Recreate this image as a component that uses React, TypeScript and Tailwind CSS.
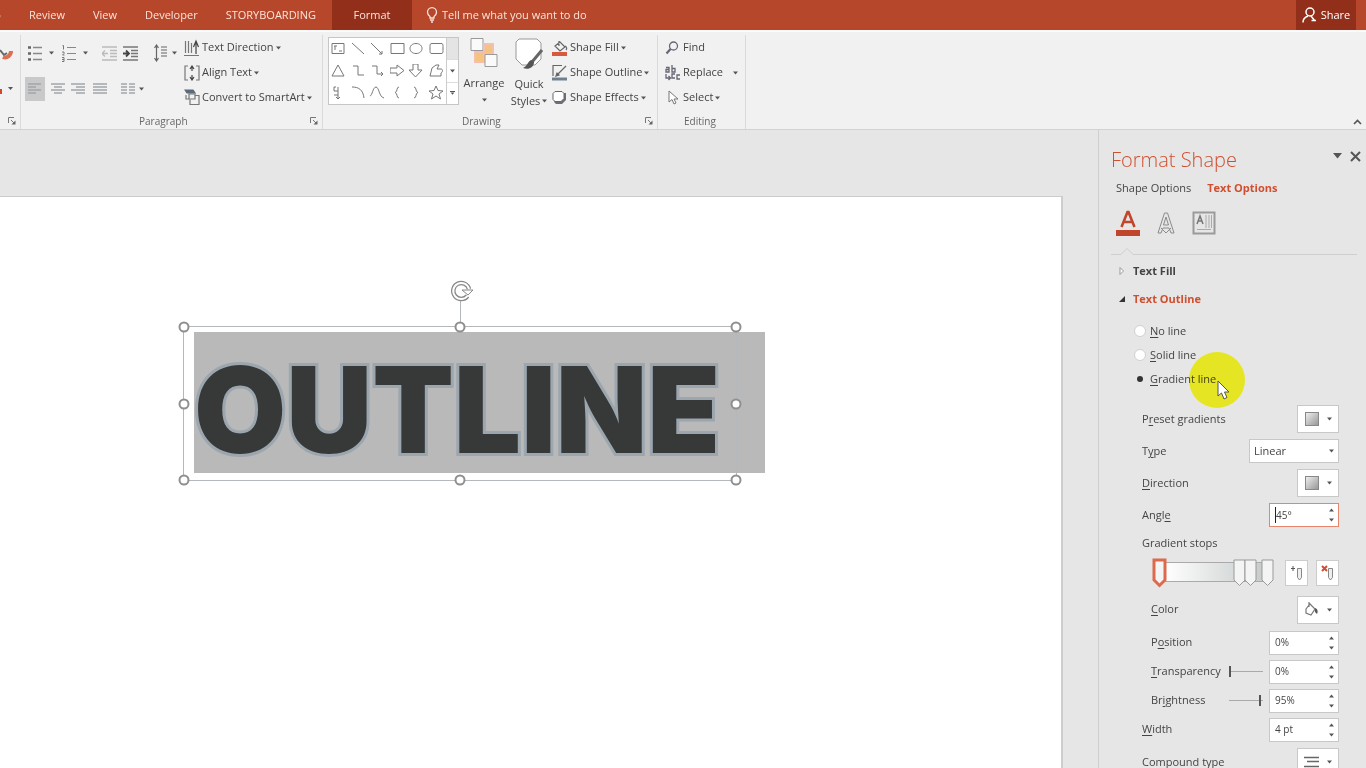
import React from 'react';

const Caret: React.FC<{ className?: string }> = ({ className = '' }) => (
  <svg className={`shrink-0 ${className}`} width="5" height="4" viewBox="0 0 5 4" fill="#555">
    <path d="M0 0.5h5L2.5 3.5z" />
  </svg>
);

const Launcher: React.FC = () => (
  <button aria-label="More options" className="ml-auto">
    <svg width="8" height="8" viewBox="0 0 8 8" fill="none" stroke="#777">
      <path d="M0.5 6V0.5H6M3 3l3 3" />
      <path d="M7.5 3.5v4h-4z" fill="#666" stroke="none" />
    </svg>
  </button>
);

// Label with its accelerator letter underlined
const Accel: React.FC<{ text: string; at?: number }> = ({ text, at = 0 }) => (
  <>
    {text.slice(0, at)}
    <span className="underline underline-offset-2">{text[at]}</span>
    {text.slice(at + 1)}
  </>
);

const tabs = ['Review', 'View', 'Developer', 'STORYBOARDING'];

const TitleTabs: React.FC = () => (
  <header className="flex h-[30px] shrink-0 items-stretch bg-[#b7472a] text-[11px] text-[#fbe3dc]">
    <nav className="flex">
      <button className="w-[15px] overflow-hidden">
        <span className="-ml-5">o</span>
      </button>
      {tabs.map((tab) => (
        <button key={tab} className="px-3.5">{tab}</button>
      ))}
      <button className="ml-0.5 w-20 bg-[#922f1a]">Format</button>
    </nav>
    <button className="ml-3.5 flex items-center gap-1">
      <svg width="12" height="16" viewBox="0 0 12 16" fill="none" stroke="#fbe3dc" strokeWidth="1.3">
        <path d="M4 11V9.5C2.500 8.500 1.500 7 1.500 5.200a4.500 4.500 0 0 1 9 0C10.500 7 9.500 8.500 8 9.500V11zM4 13h4M5 15h2" />
      </svg>
      Tell me what you want to do
    </button>
    <button className="mr-2.5 ml-auto flex w-[60px] items-center justify-center gap-1 bg-[#922f1a] text-white">
      <svg width="15" height="17" viewBox="0 0 15 17" fill="none" stroke="#fff" strokeWidth="1.5">
        <circle cx="8" cy="5" r="4" />
        <path d="M1 15.500c0-3.500 2-5.500 5-6.500M9 9l4 5M9.500 13.500h4.500" />
      </svg>
      Share
    </button>
  </header>
);

const BulletsIcon = () => (
  <svg width="15" height="17" viewBox="0 0 15 17" stroke="#888" strokeWidth="1.3">
    <path d="M5 2.500h9M5 8.500h9M5 14.500h9" />
    <path d="M0 2.500h3M0 8.500h3M0 14.500h3" stroke="#666" strokeWidth="2.500" />
  </svg>
);

const NumbersIcon = () => (
  <svg width="15" height="19" viewBox="0 0 15 19" fill="none" stroke="#888" strokeWidth="1.2">
    <path d="M5 3.500h9M5 9.500h9M5 15.500h9" />
    <path d="M0.500 1.500h1v4M0 8h2v1.500L0.500 11h2M0 13.500h2v4H0M0 15.500h2" stroke="#777" strokeWidth="1" />
  </svg>
);

const IndentIcon: React.FC<{ color: string; flip?: boolean }> = ({ color, flip }) => (
  <svg width="15" height="15" viewBox="0 0 15 15" fill="none" stroke={color} strokeWidth="1.4">
    <path d="M0 1h15M8 4.500h7M8 7.500h7M8 10.500h7M0 14h15" />
    {flip ? <path d="M6 7.500H0M3 4.500L0 7.500l3 3" /> : <path d="M0 7.500h6M3 4.500l3 3-3 3" stroke="#444" strokeWidth="1.800" />}
  </svg>
);

const SpacingIcon = () => (
  <svg width="14" height="18" viewBox="0 0 14 18" fill="none" stroke="#666" strokeWidth="1.2">
    <path d="M2.500 2v14M0.500 4l2-3 2 3M0.500 14l2 3 2-3" />
    <path d="M7 3h6M7 6h6M7 9h6M7 12h6" stroke="#aaa" strokeWidth="2" />
  </svg>
);

const AlignIcon: React.FC<{ d: string }> = ({ d }) => (
  <svg width="14" height="13" viewBox="0 0 14 13" stroke="#a3a6a9" strokeWidth="1.600">
    <path d={d} />
  </svg>
);

const TextDirectionIcon = () => (
  <svg width="16" height="18" viewBox="0 0 16 18" fill="none" stroke="#777" strokeWidth="1.2">
    <path d="M1.500 2v12M4.500 2v12M7.500 4v10M0 16.500h15" />
    <path d="M9.500 8l2.500-6 2.500 6M12 2v13" stroke="#444" />
  </svg>
);

const AlignTextIcon = () => (
  <svg width="16" height="16" viewBox="0 0 16 16" fill="none" stroke="#777" strokeWidth="1.2">
    <path d="M4 1H1v14h3M12 1h3v14h-3" />
    <path d="M8 1v5M8 10v5M6 4l2-3 2 3M6 12l2 3 2-3" stroke="#444" />
  </svg>
);

const SmartArtIcon = () => (
  <svg width="16" height="17" viewBox="0 0 16 17" fill="none" stroke="#777" strokeWidth="1.2">
    <path d="M1 1h8l2 3H3z" fill="#5b6b78" stroke="#5b6b78" />
    <path d="M2 6v4h3M8 6.500h7v9H6v-5" />
    <path d="M5 5h6v5H5z" fill="#f1f1f1" />
  </svg>
);

const CommandButton: React.FC<{ icon: React.ReactNode; label: string; menu?: boolean; far?: boolean }> = ({ icon, label, menu = true, far }) => (
  <button className="flex h-[25px] items-center whitespace-nowrap">
    <span className="mr-0.5 flex w-4 items-center">{icon}</span>
    {label}
    {menu && <Caret className={far ? 'ml-2.5' : 'ml-0.5'} />}
  </button>
);

const Divider = () => <span className="h-5 w-px bg-[#d6d6d6]" />;

const galleryShapes = [
  'M1 1.500h12v10H1zM4 4v4M3 4h3M8 9h3',
  'M1 1l12 11',
  'M1 1l11 11M9 12h3V9',
  'M1 1.500h13v10H1z',
  'M7 1.500c8 0 8 10 0 10s-8-10 0-10z',
  'M3 1.500h9c2 0 2 1 2 3v4c0 2 0 3-2 3H3c-2 0-2-1-2-3v-4c0-2 0-3 2-3z',
  'M7 1L1 12h12z',
  'M2 2h5v9h6',
  'M2 2h5v8h6M11 8l2 2-2 2',
  'M0 4h7V1l7 5.500L7 12V9H0z',
  'M4 0h5v6h4l-6.500 7L0 6h4z',
  'M3 4l4-3h3L8 5h4c2 0 2 3 0 4v3H1z',
  'M5 1H3v4h4v4H3M7 9v4M5 11l2 2 2-2M7 1v4',
  'M1 1c7 0 11 3 12 11',
  'M0 10C2 10 3 1 6 1s3 10 8 11',
  'M9 1C6 1 8 6 5 6.500 8 7 6 12 9 12',
  'M5 1c3 0 1 5 4 5.500C6 7 8 12 5 12',
  'M7 0l2 4.500 5 .5-4 3 1.500 5L7 10l-4.500 3L4 8 0 5l5-.5z',
];

const Ribbon: React.FC = () => (
  <section className="flex h-[100px] shrink-0 border-t-2 border-b border-t-[#fafafa] border-b-[#d2d2d2] bg-[#f1f1f1] pt-[3px] text-[11px] text-[#444]">
    <div className="flex w-[21px] flex-col border-r border-[#dadada]">
      <div className="flex-1 overflow-hidden pt-2.5">
        <svg width="13" height="55" viewBox="0 0 13 55" fill="none">
          <path d="M0 5l4 5 3-2" stroke="#666" strokeWidth="2" />
          <path d="M3 12c4 2 8-2 8-6" stroke="#dc6e52" strokeWidth="4" />
          <path d="M0 44h2v5H0z" fill="#d24726" />
          <path d="M8 42h5l-2.500 3z" fill="#555" />
        </svg>
      </div>
      <div className="flex h-4 items-center pr-1"><Launcher /></div>
    </div>

    <div className="flex w-[302px] flex-col border-r border-[#dadada]">
      <div className="flex flex-1">
        <div className="w-[163px] pl-1">
          <div className="flex h-9 items-center">
            <button aria-label="Bullets" className="ml-[3px] flex items-center gap-1.5"><BulletsIcon /><Caret /></button>
            <button aria-label="Numbering" className="ml-2 flex items-center gap-1.5"><NumbersIcon /><Caret /></button>
            <span className="mr-2 ml-1.5"><Divider /></span>
            <button aria-label="Decrease indent"><IndentIcon color="#bbb" flip /></button>
            <button aria-label="Increase indent" className="ml-1.5"><IndentIcon color="#777" /></button>
            <span className="mx-2"><Divider /></span>
            <button aria-label="Line spacing" className="flex items-center gap-1"><SpacingIcon /><Caret /></button>
          </div>
          <div className="flex h-9 items-center">
            <button aria-label="Align left" className="flex h-6 w-5 items-center justify-center bg-[#c9c9c9]"><AlignIcon d="M0 1h13M0 4h8M0 7h13M0 10h8" /></button>
            <button aria-label="Center" className="ml-1.5"><AlignIcon d="M0 1h14M3 4h8M0 7h14M3 10h8" /></button>
            <button aria-label="Align right" className="ml-1.5"><AlignIcon d="M0 1h14M5 4h9M0 7h14M5 10h9" /></button>
            <button aria-label="Justify" className="ml-2"><AlignIcon d="M0 1h14M0 4h14M0 7h14M0 10h14" /></button>
            <span className="mr-2 ml-1.5"><Divider /></span>
            <button aria-label="Columns" className="flex items-center gap-1"><AlignIcon d="M0 1h6M8 1h6M0 4h6M8 4h6M0 7h6M8 7h6M0 10h6M8 10h6" /><Caret /></button>
          </div>
        </div>
        <div>
          <CommandButton icon={<TextDirectionIcon />} label="Text Direction" />
          <CommandButton icon={<AlignTextIcon />} label="Align Text" />
          <CommandButton icon={<SmartArtIcon />} label="Convert to SmartArt" />
        </div>
      </div>
      <div className="flex h-4 items-center pr-1 text-[10px] text-[#666]">
        <span className="ml-[118px]">Paragraph</span>
        <Launcher />
      </div>
    </div>

    <div className="flex w-[335px] flex-col border-r border-[#dadada]">
      <div className="flex flex-1">
        <div className="mt-0.5 ml-[5px] flex h-[68px] w-[131px] border border-[#c6c6c6] bg-white">
          <div className="grid flex-1 grid-cols-6 place-items-center">
            {galleryShapes.map((d) => (
              <svg key={d} width="15" height="14" viewBox="0 0 15 14" fill="none" stroke="#777">
                <path d={d} />
              </svg>
            ))}
          </div>
          <div className="flex w-3 flex-col border-l border-[#ccc]">
            <span className="flex-1 bg-[#e4e4e4]" />
            <button aria-label="Next row" className="flex flex-1 items-center justify-center border-y border-[#ddd]"><Caret /></button>
            <button aria-label="All shapes" className="flex flex-1 items-center justify-center"><Caret className="border-t border-[#555]" /></button>
          </div>
        </div>
        <button className="flex w-[50px] flex-col items-center pt-0.5">
          <svg width="28" height="32" viewBox="0 0 28 32" fill="#fafafa" stroke="#999">
            <path d="M1 1.500h12v12H1z" />
            <path d="M14 7h9v10h-9zM5 15h9v10H5z" fill="#f4c47e" stroke="#f4bfae" strokeWidth="2" />
            <path d="M15 17.500h12v12H15z" />
          </svg>
          <span className="mt-1.5">Arrange</span>
          <Caret className="mt-1.5" />
        </button>
        <button className="flex w-[40px] flex-col items-center pt-0.5 leading-[17px]">
          <svg width="30" height="34" viewBox="0 0 30 34" fill="#fff" stroke="#999">
            <path d="M5 2h18l4 4v16l-6 6H8l-6-6V5z" />
            <path d="M28 13L18 25" stroke="#666" strokeWidth="3" />
            <path d="M18 23c-4 0-4 6-9 8 5 2 11 0 11-6z" fill="#555" stroke="none" />
          </svg>
          <span className="mt-1">Quick</span>
          <span className="flex items-center gap-0.5">Styles <Caret /></span>
        </button>
        <div className="pl-[3px]">
          <CommandButton
            label="Shape Fill"
            icon={
              <svg width="16" height="16" viewBox="0 0 16 16" fill="none" stroke="#666" strokeWidth="1.2">
                <path d="M3 6l5-4 5 5-5 4zM7 1v5M13 6c2 1 2 3 1 4" />
                <path d="M0 14h15" stroke="#d85a3a" strokeWidth="4" />
              </svg>
            }
          />
          <CommandButton
            label="Shape Outline"
            icon={
              <svg width="16" height="17" viewBox="0 0 16 17" fill="none" stroke="#666" strokeWidth="1.2">
                <path d="M10 1.500H1V12M5 11l9-9" />
                <path d="M4 12l1-3 2 2z" fill="#555" />
                <path d="M0 15h15" stroke="#718091" strokeWidth="3" />
              </svg>
            }
          />
          <CommandButton
            label="Shape Effects"
            icon={
              <svg width="15" height="15" viewBox="0 0 15 15" fill="#fff" stroke="#666">
                <path d="M4 5l3-2h7v7l-4 4H4l-2-2z" fill="#6b7078" stroke="none" />
                <path d="M3 1.500h7l2 2v5l-3 3H3l-2-2v-6z" />
              </svg>
            }
          />
        </div>
      </div>
      <div className="flex h-4 items-center pr-1 text-[10px] text-[#666]">
        <span className="ml-[139px]">Drawing</span>
        <Launcher />
      </div>
    </div>

    <div className="flex w-[88px] flex-col border-r border-[#dadada] pl-[7px]">
      <div className="flex-1">
        <CommandButton
          label="Find"
          menu={false}
          icon={
            <svg width="14" height="14" viewBox="0 0 14 14" fill="none" stroke="#667" strokeWidth="1.3">
              <circle cx="8.500" cy="5" r="4" />
              <path d="M5.500 8L1.500 12.500" strokeWidth="2.200" />
            </svg>
          }
        />
        <CommandButton
          label="Replace"
          far
          icon={
            <svg width="16" height="16" viewBox="0 0 16 16" fill="none" stroke="#667" strokeWidth="1.3">
              <path d="M1 2.500h3V7H1V4.500h3M7 0v7h3V3.500H7M10 9h-3v4h3M15 10h-3v4h3M1 9v4h4M3.500 11l2 2-2 2" />
            </svg>
          }
        />
        <CommandButton
          label="Select"
          icon={
            <svg width="14" height="16" viewBox="0 0 14 16" fill="#fff" stroke="#777">
              <path d="M4 1v11l3-2.500L9 14l2-1-2-4h4z" />
            </svg>
          }
        />
      </div>
      <div className="flex h-4 items-center pl-[19px] text-[10px] text-[#666]">Editing</div>
    </div>

    <button aria-label="Collapse the ribbon" className="mr-1 mb-1 ml-auto self-end">
      <svg width="9" height="6" viewBox="0 0 9 6" fill="none" stroke="#555" strokeWidth="1.600">
        <path d="M1 5l3.500-3.500L8 5" />
      </svg>
    </button>
  </section>
);

const handles = [
  'left-0 top-0', 'left-1/2 top-0', 'left-full top-0',
  'left-0 top-1/2', 'left-full top-1/2',
  'left-0 top-full', 'left-1/2 top-full', 'left-full top-full',
];

const Slide: React.FC = () => (
  <main className="min-w-0 flex-1 overflow-hidden pt-[66px] pr-[35px]">
    <div className="relative h-full border-t border-r-2 border-[#cdcdcd] bg-white">
      {/* selected word art */}
      <div className="absolute top-[135px] left-[194px] flex h-[141px] w-[571px] items-center bg-[#b9b9b9] pt-4">
        <span className="font-['Inter'] text-[119px] leading-none font-black whitespace-nowrap text-[#373938] [-webkit-text-stroke:6px_#9ca6af] [paint-order:stroke_fill]">
          OUTLINE
        </span>
      </div>
      <div className="absolute top-[129px] left-[183px] h-[155px] w-[554px] border border-[#b4b8bb]">
        <span className="absolute bottom-full left-1/2 h-7 w-px bg-[#b4b8bb]" />
        <svg className="absolute bottom-full left-1/2 mb-6 -ml-2.5" width="24" height="24" viewBox="0 0 24 24" fill="none">
          <path d="M17.500 17a8 8 0 1 1 1.500-7" stroke="#888" strokeWidth="4.500" />
          <path d="M17.500 17a8 8 0 1 1 1.500-7" stroke="#fff" strokeWidth="2" />
          <path d="M12 11h11l-5 5z" fill="#fff" stroke="#888" />
        </svg>
        {handles.map((pos) => (
          <span key={pos} className={`absolute size-[11px] -translate-x-1/2 -translate-y-1/2 rounded-full border-2 border-[#8f8f8f] bg-white ${pos}`} />
        ))}
      </div>
    </div>
  </main>
);

const Swatch = () => <span className="size-3.5 border border-[#888] bg-linear-to-br from-[#eee] to-[#999]" />;

const MenuButton: React.FC<{ id: string; children: React.ReactNode }> = ({ id, children }) => (
  <button id={id} className="flex h-7 w-[42px] items-center justify-center gap-2 border border-[#c8c8c8] bg-white">
    {children}
    <Caret />
  </button>
);

const Spinner: React.FC<{ id: string; value: string; active?: boolean }> = ({ id, value, active }) => (
  <div className={`flex h-6 w-[70px] items-center border bg-white pl-[5px] ${active ? 'border-[#e5866c]' : 'border-[#c8c8c8]'}`}>
    {active && <span className="h-4 w-px bg-[#222]" />}
    <input id={id} defaultValue={value} className="min-w-0 flex-1 bg-transparent text-[10px] outline-none" />
    <div className="flex w-3.5 flex-col items-center gap-1.5">
      <button aria-label="Increase" className="rotate-180"><Caret className="block" /></button>
      <button aria-label="Decrease"><Caret className="block" /></button>
    </div>
  </div>
);

const Row: React.FC<{ id: string; text: string; at?: number; className: string; children: React.ReactNode }> = ({ id, text, at, className, children }) => (
  <div className={`flex items-center ${className}`}>
    <label htmlFor={id} className="mr-auto"><Accel text={text} at={at} /></label>
    {children}
  </div>
);

const rangeClass =
  "mr-1.5 w-[34px] appearance-none bg-transparent [&::-webkit-slider-runnable-track]:h-px [&::-webkit-slider-runnable-track]:bg-[#aaa] [&::-webkit-slider-thumb]:-mt-[5px] [&::-webkit-slider-thumb]:h-[11px] [&::-webkit-slider-thumb]:w-0.5 [&::-webkit-slider-thumb]:appearance-none [&::-webkit-slider-thumb]:bg-[#555]";

const stops = [
  { left: 'left-0', color: '#dc6a4c', wide: 'stroke-3' },
  { left: 'left-20', color: '#999', wide: 'stroke-1' },
  { left: 'left-[91px]', color: '#999', wide: 'stroke-1' },
  { left: 'left-[108px]', color: '#999', wide: 'stroke-1' },
];

const lineTypes = ['No line', 'Solid line', 'Gradient line'];

const FormatPane: React.FC = () => (
  <aside className="w-[268px] shrink-0 border-l border-[#cfcfcf] pt-3.5 pr-[27px] pl-3 text-[11px] text-[#444]">
    <div className="-mr-[22px] flex h-8 items-center">
      <h2 className="mr-auto text-xl font-light text-[#cf4f30]">Format Shape</h2>
      <button aria-label="Pane options" className="mb-2 mr-2">
        <svg width="9" height="6" viewBox="0 0 9 6" fill="#555"><path d="M0 0h9L4.500 5.500z" /></svg>
      </button>
      <button aria-label="Close pane" className="mb-2">
        <svg width="11" height="11" viewBox="0 0 11 11" stroke="#555" strokeWidth="2"><path d="M1 1l9 9M10 1l-9 9" /></svg>
      </button>
    </div>
    <div className="flex h-6 items-center gap-4 pl-[5px]">
      <button>Shape Options</button>
      <button className="font-bold text-[#cf4f30]">Text Options</button>
    </div>
    <div className="flex h-[46px] items-center gap-4 pl-[5px]">
      <button aria-label="Text fill and outline">
        <svg width="24" height="28" viewBox="0 0 24 28" fill="none" stroke="#c0452a">
          <path d="M5.500 18L11.500 3h1L18.500 18M8 13h8" strokeWidth="2.600" />
          <path d="M0 24h24" strokeWidth="6" />
        </svg>
      </button>
      <button aria-label="Text effects">
        <svg width="20" height="26" viewBox="0 0 20 26" fill="none" stroke="#8b8b8b">
          <path d="M2 23L8.500 3h3L18 23h-3l-2-5H7l-2 5zM7.500 15L10 7l2.500 8z" />
          <path d="M5 18l5 5 5-5" />
        </svg>
      </button>
      <button aria-label="Text box">
        <svg width="24" height="26" viewBox="0 0 24 26" fill="none" stroke="#9a9a9a">
          <path d="M1.500 2.500h21v21h-21z" strokeWidth="2" />
          <path d="M5 14L8 6l3 8M6 11h4" stroke="#777" strokeWidth="1.500" />
          <path d="M14 5v13M17 5v13M19.500 5v13M5 19.500h14" stroke="#aaa" />
        </svg>
      </button>
    </div>
    <svg className="block w-full" height="10" viewBox="0 0 228 10" preserveAspectRatio="xMinYMid slice" overflow="visible" fill="none" stroke="#cfcfcf">
      <path d="M0 8.500h10l6-6 6 6h224" />
    </svg>

    <button className="mt-px flex h-7 items-center gap-2 pl-2 font-bold">
      <svg width="6" height="8" viewBox="0 0 6 8" fill="#fff" stroke="#999"><path d="M1 0.500L4.500 4 1 7.500z" /></svg>
      Text Fill
    </button>
    <button className="flex h-7 items-center gap-2 pl-2 font-bold text-[#cf4f30]">
      <svg width="6" height="6" viewBox="0 0 6 6" fill="#333"><path d="M6 0v6H0z" /></svg>
      Text Outline
    </button>

    <fieldset className="relative mt-1.5 pl-[23px]">
      {lineTypes.map((type) => (
        <label key={type} className="flex h-6 items-center gap-1">
          <input
            type="radio"
            name="line"
            defaultChecked={type === 'Gradient line'}
            className="size-3 appearance-none rounded-full border border-[#d0d0d0] bg-white checked:border-3 checked:border-[#e6e6e6] checked:bg-[#333]"
          />
          <span><Accel text={type} /></span>
        </label>
      ))}
      {/* click highlight and pointer */}
      <span className="absolute top-[33px] left-[78px] size-14 rounded-full bg-[#fefe26] mix-blend-multiply" />
      <svg className="absolute top-[61px] left-[106px]" width="13" height="21" viewBox="0 0 13 21" fill="#fff" stroke="#555">
        <path d="M1 1v15l3.500-3L7 19l3-1.500L7.500 12H12z" />
      </svg>
    </fieldset>

    <div className="mt-3 pl-[31px]">
      <Row id="preset" text="Preset gradients" at={1} className="h-8"><MenuButton id="preset"><Swatch /></MenuButton></Row>
      <Row id="type" text="Type" at={1} className="h-8">
        <div className="flex h-6 w-[90px] items-center border border-[#c8c8c8] bg-white pr-1">
          <select id="type" className="min-w-0 flex-1 appearance-none bg-transparent pl-1">
            <option>Linear</option>
          </select>
          <Caret />
        </div>
      </Row>
      <Row id="direction" text="Direction" className="h-8"><MenuButton id="direction"><Swatch /></MenuButton></Row>
      <Row id="angle" text="Angle" at={4} className="h-8"><Spinner id="angle" value="45°" active /></Row>
      <div className="flex h-6 items-center">Gradient stops</div>

      <div className="flex h-9 items-center gap-2 pl-2.5">
        <div className="relative mr-auto h-[30px] w-[122px]">
          <div className="mt-1 ml-3 h-5 w-[108px] border border-[#aaa] bg-linear-to-r from-white to-[#c3c7c7]" />
          {stops.map((stop) => (
            <button key={stop.left} aria-label="Gradient stop" className={`absolute top-0 ${stop.left}`}>
              <svg className={stop.wide} width="15" height="30" viewBox="0 0 15 30" fill="#f4f4f4" stroke={stop.color}>
                <path d="M2 2h11v20l-5.500 5.500L2 22z" />
              </svg>
            </button>
          ))}
        </div>
        <button aria-label="Add gradient stop" className="flex h-[26px] w-[23px] items-center justify-center border border-[#ccc] bg-white">
          <svg width="14" height="18" viewBox="0 0 14 18" fill="#eee" stroke="#888">
            <path d="M7.500 4.500h4v9l-2 2.500-2-2.500z" />
            <path d="M3 2v5M1 4.500h4" stroke="#555" />
          </svg>
        </button>
        <button aria-label="Remove gradient stop" className="flex h-[26px] w-[23px] items-center justify-center border border-[#ccc] bg-white">
          <svg width="14" height="18" viewBox="0 0 14 18" fill="#eee" stroke="#888">
            <path d="M7.500 4.500h4v9l-2 2.500-2-2.500z" />
            <path d="M1 2l5 5M6 2L1 7" stroke="#cf4f30" strokeWidth="2" />
          </svg>
        </button>
      </div>

      <div className="pl-[9px]">
        <Row id="color" text="Color" className="h-[37px]">
          <MenuButton id="color">
            <svg width="15" height="15" viewBox="0 0 15 15" fill="none" stroke="#777" strokeWidth="1.2">
              <path d="M2 7l4-5 5 5-4 6-5-2zM5 0v5" />
              <path d="M11 6c3 1 3 4 2 6l-2-2z" fill="#555" stroke="none" />
            </svg>
          </MenuButton>
        </Row>
        <Row id="position" text="Position" at={1} className="h-[29px]"><Spinner id="position" value="0%" /></Row>
        <Row id="transparency" text="Transparency" className="h-[29px]">
          <input type="range" aria-label="Transparency slider" defaultValue={0} className={rangeClass} />
          <Spinner id="transparency" value="0%" />
        </Row>
        <Row id="brightness" text="Brightness" at={2} className="h-[29px]">
          <input type="range" aria-label="Brightness slider" defaultValue={95} className={rangeClass} />
          <Spinner id="brightness" value="95%" />
        </Row>
      </div>
      <Row id="width" text="Width" className="h-[29px]"><Spinner id="width" value="4 pt" /></Row>
      <Row id="compound" text="Compound type" className="h-9">
        <MenuButton id="compound">
          <svg width="15" height="12" viewBox="0 0 15 12" stroke="#666"><path d="M0 1.500h15M3 5.500h12M0 10.500h15" strokeWidth="1.500" /></svg>
        </MenuButton>
      </Row>
    </div>
  </aside>
);

const App: React.FC = () => {
  return (
    <div className="flex h-screen flex-col overflow-hidden bg-[#e6e6e6] font-['Open_Sans',sans-serif]">
      <TitleTabs />
      <Ribbon />
      <div className="flex min-h-0 flex-1">
        <Slide />
        <FormatPane />
      </div>
    </div>
  );
};

export default App;
